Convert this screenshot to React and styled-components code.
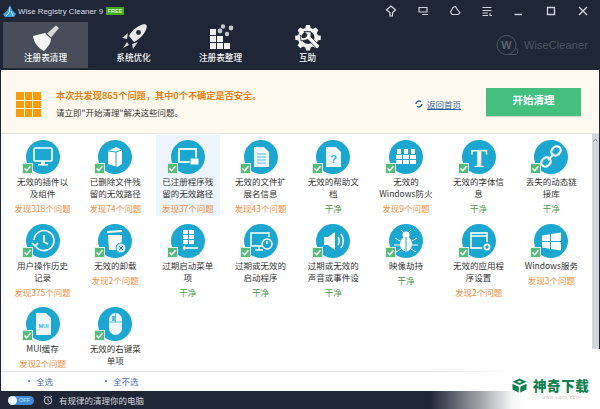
import React from 'react';
import styled, { createGlobalStyle } from 'styled-components';

const Global = createGlobalStyle`
  html, body { margin: 0; padding: 0; background: #fff; }
  body { font-family: "Noto Sans CJK SC", "Liberation Sans", sans-serif; }
  * { box-sizing: border-box; }
`;

const Window = styled.div`
  position: relative; width: 600px; height: 409px; overflow: hidden;
  display: flex; flex-direction: column; background: #1f2737;
`;
const Header = styled.header`
  height: 70px; flex: none; display: flex; flex-direction: column; background: #1f2737;
`;
const TitleBar = styled.div`
  height: 22px; display: flex; align-items: center; padding-left: 3px;
`;
const AppName = styled.span`
  font-family: "Liberation Sans", sans-serif; font-size: 7.9px; color: #d9dde3; margin-left: 2px;
`;
const FreeBadge = styled.span`
  font-family: "Liberation Sans", sans-serif; font-size: 5.5px; font-weight: 700; color: #d8f5c8;
  background: #45a821; width: 18px; height: 8px; line-height: 8px; text-align: center; margin-left: 3px;
`;
const WindowControls = styled.div`
  margin-left: auto; display: flex; margin-right: 1px;
`;
const ControlButton = styled.div`
  width: 32px; height: 22px; display: flex; align-items: center; justify-content: center;
`;
const TabRow = styled.div`
  flex: 1; display: flex; align-items: flex-start; padding-left: 3px;
`;
const Tab = styled.div`
  width: ${p => (p.$active ? 85 : 87)}px; height: 46px; margin-right: ${p => (p.$active ? 2 : 0)}px;
  background: ${p => (p.$active ? '#484d59' : 'transparent')};
  display: flex; flex-direction: column; align-items: center; padding-top: 2px;
`;
const TabLabel = styled.span`
  font-size: 8.6px; line-height: 12px; color: #f2f3f5; font-weight: 500;
`;
const Brand = styled.div`
  margin-left: auto; margin-right: 12px; display: flex; align-items: center; gap: 4px; height: 26px; margin-top: 10px;
`;
const BrandName = styled.span`
  font-family: "Liberation Sans", sans-serif; font-size: 11px; color: #4d5565; letter-spacing: 0.1px;
`;

const Main = styled.main`
  flex: 1; margin-left: 1px; margin-right: 1px; background: #fff; display: flex; flex-direction: column; min-height: 0;
`;
const Banner = styled.section`
  height: 64px; flex: none; background: #fef9ee; border-bottom: 1px solid #dfe2e4;
  display: flex; align-items: center; padding: 0 16px 0 15px;
`;
const BannerGrid = styled.div`
  width: 25px; height: 25px; display: grid; grid-template-columns: repeat(3, 1fr); grid-template-rows: repeat(3, 1fr); gap: 1px; margin: 6px 15px 0 0;
`;
const BannerCell = styled.span`
  background: #f59b0d;
`;
const BannerText = styled.div`
  display: flex; flex-direction: column; gap: 5px; margin-top: 3px; width: 359px;
`;
const BannerTitle = styled.div`
  font-size: 9.2px; line-height: 12px; color: #e8820c; font-weight: 700; white-space: nowrap;
`;
const BannerHint = styled.div`
  font-size: 8.5px; line-height: 12px; color: #333; white-space: nowrap;
`;
const BackLink = styled.a`
  display: flex; align-items: center; gap: 4px; font-size: 8.5px; line-height: 12px; color: #2d5f9e; text-decoration: underline; white-space: nowrap; width: 71px; margin-top: 4px;
`;
const StartButton = styled.button`
  width: 95px; height: 28px; border: none; background: #43bf80; color: #fff; font-family: inherit;
  font-size: 10.5px; font-weight: 700; padding: 0 0 4px; box-shadow: 0 1px 1px rgba(0,0,0,.15);
`;

const Content = styled.div`
  flex: 1; display: flex; min-height: 0;
`;
const ListArea = styled.div`
  flex: 1; display: flex; flex-direction: column; min-width: 0; min-height: 0;
`;
const Grid = styled.div`
  flex: 1; min-height: 0; overflow: hidden; display: grid; grid-template-columns: repeat(8, 64px); column-gap: 8.7px; grid-auto-rows: 81px; row-gap: 2.5px;
  padding: 1px 0 0 9.5px; align-content: start;
`;
const Cell = styled.div`
  display: flex; flex-direction: column; align-items: center; padding-top: 5px;
  background: ${p => (p.$selected ? '#edf4fb' : 'transparent')};
`;
const IconWrap = styled.div`
  position: relative; width: 34px; height: 34px; flex: none;
`;
const Check = styled.span`
  position: absolute; left: -4px; bottom: 0; width: 11px; height: 11px; background: #57ba7b; border: 1px solid #e4f4ea;
  display: flex; align-items: center; justify-content: center;
`;
const ItemTitle = styled.div`
  width: 56px; margin-top: 1px; font-size: 8.5px; line-height: 12px; color: #333; text-align: center; overflow-wrap: anywhere;
`;
const ItemStatus = styled.div`
  margin-top: 3px; font-size: 8.5px; line-height: 12px; white-space: nowrap; color: ${p => (p.$clean ? '#4a9a4a' : '#ee8f3e')};
`;
const SelectRow = styled.div`
  height: 20px; flex: none; border-top: 1px solid #e3e6ea; display: flex; align-items: center; padding: 0 0 2px 27px; margin-right: -7px;
`;
const SelectLink = styled.a`
  width: 77px; font-size: 8.5px; line-height: 12px; color: #4a6fb5; display: flex; align-items: center; gap: 6px;
  &::before { content: ''; width: 2px; height: 2px; background: #4a6fb5; border-radius: 50%; }
`;
const Scrollbar = styled.div`
  width: 7px; flex: none; background: #d3d7db; display: flex; justify-content: center; padding-top: 4px; margin-bottom: 20px;
`;
const Footer = styled.footer`
  height: 18px; flex: none; display: flex; align-items: center; padding-left: 8px; background: #1f2737;
`;
const Toggle = styled.div`
  position: relative; width: 26px; height: 9px; border-radius: 5px; background: #3d8fdc;
  font-family: "Liberation Sans", sans-serif; font-size: 5.5px; line-height: 9px; color: #cfe4f8; text-align: right; padding-right: 4px;
  &::before { content: ''; position: absolute; left: 0; top: 0; width: 9px; height: 9px; border-radius: 50%; background: #eef5fc; }
`;
const FooterText = styled.span`
  font-size: 8.5px; line-height: 12px; color: #d2d5da; margin-left: 6px;
`;
const Watermark = styled.div`
  position: absolute; right: 0; bottom: 0; width: 170px; height: 60px; pointer-events: none;
  background: linear-gradient(to right, rgba(255,255,255,0) 0%, rgba(255,255,255,.95) 48%, #fff 55%);
  display: flex; align-items: flex-start; padding: 29px 0 0 82px; gap: 6px;
`;
const WatermarkText = styled.div`
  display: flex; flex-direction: column; align-items: center;
`;
const WatermarkName = styled.span`
  font-size: 13.5px; line-height: 14px; font-weight: 900; color: #11804f; letter-spacing: .6px; white-space: nowrap;
`;
const WatermarkUrl = styled.span`
  font-family: "Liberation Sans", sans-serif; font-size: 4.5px; line-height: 6px; color: #c9b9b9; letter-spacing: .7px; margin-top: 3px;
`;

const Ico = ({ w = 24, h = 24, vb, children, style }) => (
  <svg width={w} height={h} viewBox={vb || `0 0 ${w} ${h}`} style={style}>{children}</svg>
);

const S = ({ d, w = 1, c = '#cfd3da' }) => <path d={d} fill="none" stroke={c} strokeWidth={w} />;

const controlIcons = [
  <Ico w={12} h={12} key="a"><path d="M6 1L10.5 5 7.5 7.5V11H5V7.5L1.5 5Z" fill="none" stroke="#d5d8dd" strokeWidth="1.2" /></Ico>,
  <Ico w={12} h={12} key="b"><S d="M2 2.5H10V7H2ZM5 9.5H11" w={1.2} /></Ico>,
  <Ico w={12} h={12} key="c"><S d="M1.5 7L4 2.5 6.5 1.5 8 4 11 8 9 9.5H3Z" w={1.1} /></Ico>,
  <Ico w={12} h={12} key="d"><S d="M1.5 2.5H10.5M1.5 5.5H10.5M1.5 8H7M1.5 10.5H7M9 8V10.5H11" w={1.1} /></Ico>,
  <Ico w={12} h={12} key="e"><S d="M1.5 9.5H9" w={1.4} /></Ico>,
  <Ico w={12} h={12} key="f"><S d="M2.5 2.5H9.5V9.5H2.5Z" w={1.3} /></Ico>,
  <Ico w={12} h={12} key="g"><S d="M2 2L10 10M10 2L2 10" w={1.4} /></Ico>,
];

const tabIcons = {
  broom: (
    <Ico w={30} h={27} vb="0 0 30 27">
      <path d="M14 9L2 12C3 19 7 24 13 27C17 23 20 19 20 15Z" fill="#f4f4f4" />
      <path d="M16 9.5L25 1.5L28 4L20 13.5Z" fill="#d8d8d8" />
    </Ico>
  ),
  rocket: (
    <Ico w={28} h={27} vb="0 0 28 27">
      <path d="M25 0C18 1 12 6 9 12L14 18C20 15 26 9 27 2Z" fill="#e9e9e9" />
      <circle cx="18.5" cy="8.5" r="2.4" fill="#1f2737" />
      <path d="M8 9L2 14 7 15ZM18 18L13 25 12 20ZM7 18L3 24 9 21Z" fill="#d5d5d5" />
    </Ico>
  ),
  blocks: (
    <Ico w={28} h={27} vb="0 0 28 27">
      <g fill="#f1f1f1">
        <rect x="3" y="19" width="6" height="6" /><rect x="10" y="19" width="6" height="6" /><rect x="17" y="19" width="6" height="6" />
        <rect x="3" y="12" width="6" height="6" /><rect x="10" y="12" width="6" height="6" />
        <rect x="3" y="5" width="6" height="6" />
      </g>
      <g fill="#c4c7cc"><circle cx="13" cy="7" r="2.4" /><circle cx="20" cy="10" r="2.2" /><circle cx="16" cy="2.5" r="2.2" /><circle cx="24" cy="4" r="2.4" /></g>
    </Ico>
  ),
  gear: (
    <Ico w={28} h={27} vb="0 0 28 27">
      <path d="M12 1h4l.6 3 2.4 1 2.6-1.6 2.8 2.8-1.6 2.6 1 2.4 3 .6v4l-3 .6-1 2.4 1.6 2.6-2.8 2.8-2.6-1.6-2.4 1-.6 3h-4l-.6-3-2.4-1-2.6 1.6-2.8-2.8 1.6-2.6-1-2.4-3-.6v-4l3-.6 1-2.4L3.600 6.200 6.400 3.400 9 5l2.400-1z" fill="#f1f1f1" />
      <circle cx="14" cy="13.500" r="6.500" fill="#1f2737" />
      <path d="M10 7.500L13 10.500 12 13 9 14 6.500 11 7 17 14 15.500 23 25 26 22 17 13 17 8Z" fill="#f8f8f8" stroke="#1f2737" strokeWidth=".8" />
    </Ico>
  ),
};

const W = '#fff';
const B = '#1ba7d0';
const glyphs = {
  monitor: <g><rect x="8" y="8" width="18" height="13" rx="1" fill="none" stroke={W} strokeWidth="1.6" /><path d="M15 21h4v3h3v1.500H12V24h3z" fill={W} /></g>,
  box: <g><path d="M10 11l8-4 6 3v14l-5 3-9-3z" fill={W} /><path d="M18 12v15M10 11l8 1 6-2" fill="none" stroke={B} strokeWidth="1" /></g>,
  windows: <g><rect x="8" y="9" width="17" height="13" fill="none" stroke={W} strokeWidth="1.8" /><rect x="19" y="18" width="9" height="7" fill={W} stroke={B} strokeWidth="1" /></g>,
  doc: <g><path d="M10 7h10l5 5v15H10z" fill="#eef8fc" /><path d="M13 14h9M13 17h9M13 20h9M13 23h9" stroke="#5bbcd9" strokeWidth="1.200" /></g>,
  help: <g><path d="M10 7h10l5 5v15H10z" fill="#eef8fc" /><text x="17.500" y="23" fontSize="11" fontWeight="700" fontFamily="Liberation Sans" textAnchor="middle" fill="#3fb1d4">?</text></g>,
  wall: <g fill={W}><rect x="8" y="9" width="4" height="5" /><rect x="15" y="9" width="4" height="5" /><rect x="22" y="9" width="4" height="5" /><rect x="7" y="15" width="6" height="4" /><rect x="14" y="15" width="6" height="4" /><rect x="21" y="15" width="6" height="4" /><rect x="7" y="20" width="6" height="4" /><rect x="14" y="20" width="6" height="4" /><rect x="21" y="20" width="6" height="4" /></g>,
  font: <text x="17" y="27" fontSize="25" fontWeight="700" fontFamily="Liberation Serif" textAnchor="middle" fill={W}>T</text>,
  link: <g fill="none" stroke={W} strokeWidth="2.200"><rect x="17" y="7" width="10" height="8" rx="4" transform="rotate(-45 22 11)" /><rect x="7" y="18" width="10" height="8" rx="4" transform="rotate(-45 12 22)" /><path d="M14 20l6-6" /></g>,
  history: <g fill="none" stroke={W} strokeWidth="1.600"><path d="M9 21a10 10 0 1 0-1-5" /><path d="M18 11v7l4 2" /><path d="M6 19l3 3 3-3" /></g>,
  trash: <g><path d="M10 11h14l-1 15H11z" fill={W} /><path d="M9 8l15-1" stroke={W} strokeWidth="2" /><circle cx="23" cy="24" r="5" fill="#cfe9f3" stroke={B} /><path d="M21 22l4 4m0-4l-4 4" stroke="#47a" strokeWidth="1" /></g>,
  menu: <g><g fill={W}><rect x="12" y="6" width="5" height="4" /><rect x="18" y="6" width="5" height="4" /><rect x="12" y="11" width="5" height="4" /><rect x="18" y="11" width="5" height="4" /><rect x="12" y="16" width="5" height="4" /><rect x="18" y="16" width="5" height="4" /></g><path d="M12 24h15M12 24l2-2m-2 2l2 2" fill="none" stroke={W} strokeWidth="1.400" /></g>,
  power: <g fill="none" stroke={W} strokeWidth="1.500"><path d="M20 22H7V9h18v4" /><path d="M11 26h8M15 22v4" /><circle cx="23" cy="20" r="5" fill={B} /><path d="M23 17v3" /></g>,
  sound: <g><path d="M8 13h4l7-5v18l-7-5H8z" fill={W} /><path d="M22 13c1.500 2.500 1.500 5.500 0 8M25 10c3 4 3 10 0 14" fill="none" stroke={W} strokeWidth="1.500" /></g>,
  bug: <g><ellipse cx="17" cy="20" rx="6" ry="7.500" fill={W} /><circle cx="17" cy="11" r="3.500" fill={W} /><path d="M17 13v14M12 6l3 3M22 6l-3 3M6 14l5 3M28 14l-5 3M5 21h6M29 21h-6M7 28l5-3M27 28l-5-3" stroke={W} strokeWidth="1" fill="none" /><path d="M17 13v14" stroke={B} strokeWidth="1" /></g>,
  appgear: <g><rect x="9" y="9" width="16" height="15" fill="none" stroke={W} strokeWidth="1.600" /><path d="M9 12h16" stroke={W} strokeWidth="1.500" /><circle cx="25" cy="23" r="5" fill={B} /><circle cx="25" cy="23" r="2.600" fill="none" stroke={W} strokeWidth="1.800" /></g>,
  win: <g fill={W}><path d="M8 11.500l8-1.200V17H8zM17 10l10-1.500V17H17zM8 18h8v6.700l-8-1.200zM17 18h10v8.500L17 25z" /></g>,
  mui: <g><path d="M10 6h10l5 5v17H10z" fill="#eef8fc" /><text x="17.500" y="21" fontSize="5.500" fontWeight="700" fontFamily="Liberation Sans" textAnchor="middle" fill="#3fb1d4">MUI</text></g>,
  mouse: <g><rect x="11" y="6" width="13" height="22" rx="6.500" fill="#eef8fc" /><path d="M11 15h13M17.500 6v9" stroke="#5bbcd9" strokeWidth="1" /><rect x="14" y="9" width="3" height="5" fill="#5bbcd9" /></g>,
};

const items = [
  ['无效的插件以及组件', '发现318个问题', 'monitor'],
  ['已删除文件残留的无效路径', '发现74个问题', 'box'],
  ['已注册程序残留的无效路径', '发现37个问题', 'windows', true],
  ['无效的文件扩展名信息', '发现43个问题', 'doc'],
  ['无效的帮助文档', '干净', 'help'],
  ['无效的 Windows防火', '发现9个问题', 'wall'],
  ['无效的字体信息', '干净', 'font'],
  ['丢失的动态链接库', '干净', 'link'],
  ['用户操作历史记录', '发现375个问题', 'history'],
  ['无效的卸载', '发现2个问题', 'trash'],
  ['过期启动菜单项', '干净', 'menu'],
  ['过期或无效的启动程序', '干净', 'power'],
  ['过期或无效的声音或事件设', '干净', 'sound'],
  ['映像劫持', '干净', 'bug'],
  ['无效的应用程序设置', '发现2个问题', 'appgear'],
  ['Windows服务', '发现3个问题', 'win'],
  ['MUI缓存', '发现2个问题', 'mui'],
  ['无效的右键菜单项', null, 'mouse'],
];

const CleanerItem = ({ title, status, icon, selected }) => (
  <Cell $selected={selected}>
    <IconWrap>
      <svg width="34" height="34" viewBox="0 0 34 34">
        <circle cx="17" cy="17" r="17" fill={B} />
        {glyphs[icon]}
      </svg>
      <Check>
        <svg width="9" height="9" viewBox="0 0 9 9"><path d="M1.500 4.500L3.700 6.700 7.500 2.200" fill="none" stroke="#fff" strokeWidth="1.500" /></svg>
      </Check>
    </IconWrap>
    <ItemTitle>{title}</ItemTitle>
    {status && <ItemStatus $clean={status === '干净'}>{status}</ItemStatus>}
  </Cell>
);

export default function App() {
  return (
    <Window>
      <Global />
      <Header>
        <TitleBar>
          <Ico w={13} h={12} vb="0 0 13 12">
            <path d="M7 0L4 6 0 9 2 12H11L13 9 9 5Z" fill="#3f9fe0" />
            <path d="M7 2L6 8 3 11M8 6L10 11" stroke="#dff" strokeWidth=".8" fill="none" />
          </Ico>
          <AppName>Wise Registry Cleaner 9</AppName>
          <FreeBadge>FREE</FreeBadge>
          <WindowControls>
            {controlIcons.map((icon, i) => <ControlButton key={i}>{icon}</ControlButton>)}
          </WindowControls>
        </TitleBar>
        <TabRow>
          <Tab $active>{tabIcons.broom}<TabLabel>注册表清理</TabLabel></Tab>
          <Tab>{tabIcons.rocket}<TabLabel>系统优化</TabLabel></Tab>
          <Tab>{tabIcons.blocks}<TabLabel>注册表整理</TabLabel></Tab>
          <Tab>{tabIcons.gear}<TabLabel>互助</TabLabel></Tab>
          <Brand>
            <Ico w={24} h={22} vb="0 0 24 22">
              <circle cx="10.500" cy="11" r="9.500" fill="none" stroke="#4d5565" strokeWidth="1" />
              <path d="M19 14a3.500 3.500 0 0 1 1 6.500h-7" fill="none" stroke="#4d5565" strokeWidth="1" />
              <text x="10.500" y="15" fontSize="11" fontWeight="700" fontFamily="Liberation Sans" textAnchor="middle" fill="#5c6474">W</text>
            </Ico>
            <BrandName>WiseCleaner</BrandName>
          </Brand>
        </TabRow>
      </Header>
      <Main>
        <Banner>
          <BannerGrid>
            {Array.from({ length: 9 }, (_, i) => <BannerCell key={i} />)}
          </BannerGrid>
          <BannerText>
            <BannerTitle>本次共发现865个问题，其中0个不确定是否安全。</BannerTitle>
            <BannerHint>请立即"开始清理"解决这些问题。</BannerHint>
          </BannerText>
          <BackLink>
            <Ico w={8} h={8}>
              <path d="M1 4a3 3 0 0 1 5-2.200M7 4a3 3 0 0 1-5 2.200" fill="none" stroke="#2d5f9e" strokeWidth="1.400" />
            </Ico>
            返回首页
          </BackLink>
          <StartButton>开始清理</StartButton>
        </Banner>
        <Content>
          <ListArea>
            <Grid>
              {items.map(([title, status, icon, selected]) => (
                <CleanerItem key={title} title={title} status={status} icon={icon} selected={selected} />
              ))}
            </Grid>
            <SelectRow>
              <SelectLink>全选</SelectLink>
              <SelectLink>全不选</SelectLink>
            </SelectRow>
          </ListArea>
          <Scrollbar>
            <Ico w={5} h={4}><path d="M0.500 3.500L2.500 1 4.500 3.500" fill="none" stroke="#888" strokeWidth="1" /></Ico>
          </Scrollbar>
        </Content>
      </Main>
      <Footer>
        <Toggle>OFF</Toggle>
        <Ico w={10} h={10} style={{ marginLeft: 9 }}>
          <circle cx="5" cy="5.500" r="3.700" fill="none" stroke="#d2d5da" strokeWidth="1" />
          <path d="M5 3.500V5.500L6.500 6.500M1 2L2.500 .8M9 2L7.500 .8" fill="none" stroke="#d2d5da" strokeWidth="1" />
        </Ico>
        <FooterText>有规律的清理你的电脑</FooterText>
      </Footer>
      <Watermark>
        <Ico w={15} h={15} vb="0 0 16 16">
          <path d="M8 0.500L15.500 4 8 7.500.5 4Z" fill="#11804f" />
          <path d="M5.500 4L8 2.800 10.500 4 8 5.200Z" fill="#fff" />
          <path d="M.5 6L7.200 9.200V15.500L.5 12.300Z M15.500 6L8.800 9.200V15.500L15.500 12.300Z" fill="#11804f" />
        </Ico>
        <WatermarkText>
          <WatermarkName>神奇下载</WatermarkName>
          <WatermarkUrl>www.sqxz.com</WatermarkUrl>
        </WatermarkText>
      </Watermark>
    </Window>
  );
}
